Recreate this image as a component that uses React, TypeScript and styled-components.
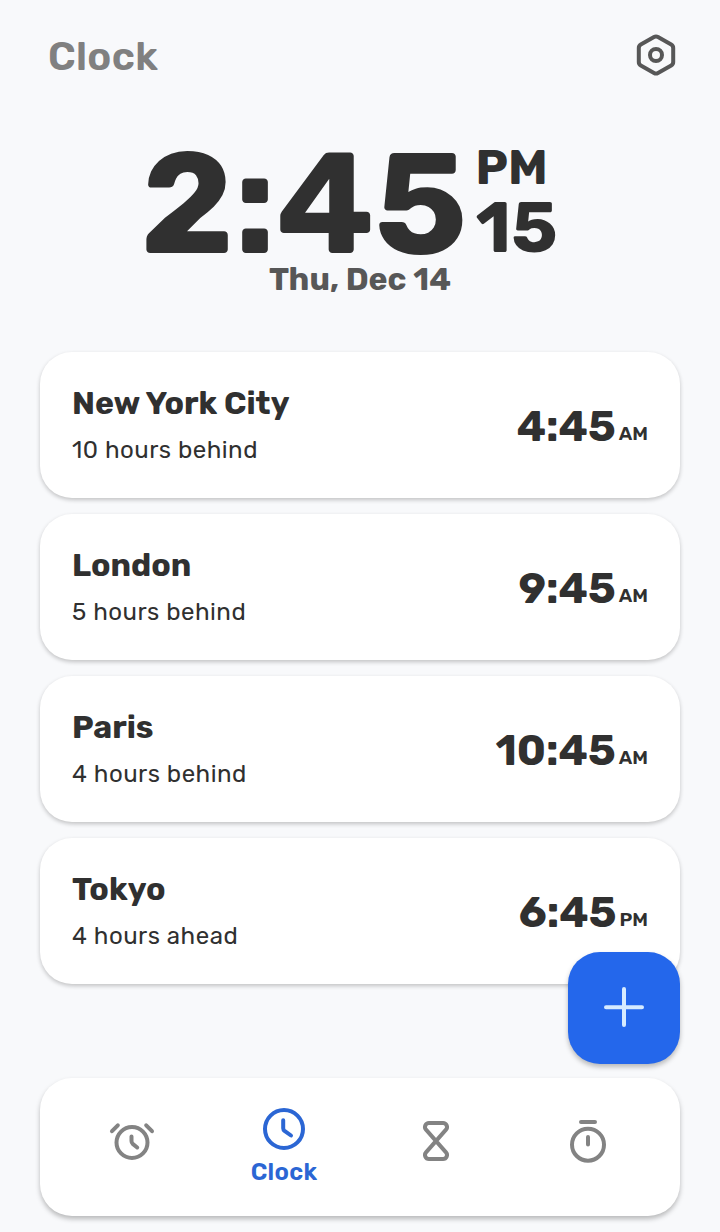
import React from 'react';
import styled, { createGlobalStyle } from 'styled-components';

const GlobalStyle = createGlobalStyle`
  * { box-sizing: border-box; }
  body {
    margin: 0;
    background: #f8f9fb;
    color: #303030;
    font-family: Rubik, Inter, "Liberation Sans", sans-serif;
  }
`;

const Screen = styled.div`
  position: relative;
  display: flex;
  flex-direction: column;
  width: 720px;
  height: 1232px;
  padding: 0 40px 16px;
  overflow: hidden;
`;

const Header = styled.header`
  display: flex;
  align-items: center;
  justify-content: space-between;
  height: 112px;
  padding: 0 0 1px 8px;
`;

const Title = styled.h1`
  margin: 0;
  padding-top: 2px;
  font-size: 40px;
  line-height: 40px;
  font-weight: 600;
  letter-spacing: 0.3px;
  color: #808080;
`;

const SettingsButton = styled.button`
  display: flex;
  padding: 0;
  border: 0;
  background: none;
  color: #575757;
`;

const Hero = styled.section`
  display: flex;
  flex-direction: column;
  height: 240px;
  padding-top: 38px;
`;

const HeroTime = styled.div`
  display: flex;
  gap: 13px;
  height: 118px;
  padding-left: 100.5px;
`;

const HeroDigits = styled.div`
  width: 322px;
  padding-top: 3px;
  font-size: 144px;
  line-height: 102px;
  font-weight: 700;
  white-space: nowrap;
`;

const HeroSide = styled.div`
  display: flex;
  flex-direction: column;
  gap: 18px;
`;

const Meridiem = styled.div`
  font-size: 48px;
  line-height: 35px;
  font-weight: 700;
`;

const Seconds = styled.div`
  font-size: 72px;
  line-height: 50px;
  font-weight: 700;
`;

const DateLine = styled.div`
  font-size: 32px;
  line-height: 22px;
  font-weight: 700;
  text-align: center;
  color: #575757;
`;

const CardList = styled.main`
  display: flex;
  flex-direction: column;
  gap: 16px;
`;

const Card = styled.article`
  display: flex;
  align-items: center;
  justify-content: space-between;
  height: 146px;
  padding: 0 32px;
  border-radius: 32px;
  background: #fff;
  box-shadow: 0 2px 4px rgba(0, 0, 0, 0.22);
`;

const Place = styled.div`
  display: flex;
  flex-direction: column;
  gap: 17px;
`;

const City = styled.h2`
  margin: 0;
  font-size: 32px;
  line-height: 32px;
  font-weight: 700;
`;

const Offset = styled.p`
  margin: 0;
  font-size: 24px;
  line-height: 28px;
  letter-spacing: 0.5px;
`;

const CardTime = styled.div`
  display: flex;
  align-items: flex-end;
  gap: 3px;
  padding-top: 4px;
`;

const Digits = styled.span`
  font-size: 43px;
  line-height: 42px;
  font-weight: 700;
`;

const Suffix = styled.span`
  font-size: 19.2px;
  line-height: 28px;
  font-weight: 600;
`;

const AddButton = styled.button`
  position: absolute;
  right: 40px;
  bottom: 168px;
  display: flex;
  align-items: center;
  justify-content: center;
  width: 112px;
  height: 112px;
  padding: 0;
  border: 0;
  border-radius: 32px;
  background: #2467eb;
  color: #d6ebff;
  box-shadow: 0 3px 5px rgba(0, 0, 0, 0.26);
`;

const Nav = styled.nav`
  display: flex;
  height: 138px;
  margin-top: auto;
  padding: 0 16px;
  border-radius: 32px;
  background: #fff;
  box-shadow: 0 3px 5px rgba(0, 0, 0, 0.26);
`;

const NavItem = styled.a<{ $active?: boolean }>`
  display: flex;
  flex: 1;
  flex-direction: column;
  align-items: center;
  padding-top: ${(p) => (p.$active ? 27 : 39)}px;
  color: ${(p) => (p.$active ? '#2b66d4' : '#838383')};
`;

const NavLabel = styled.span`
  margin-top: 10px;
  font-size: 24px;
  line-height: 18px;
  font-weight: 600;
  letter-spacing: 0.3px;
`;

const Icon = styled.svg`
  display: block;
  fill: none;
  stroke: currentColor;
  stroke-width: 4;
  stroke-linecap: round;
  stroke-linejoin: round;
`;

const zones = [
  { city: 'New York City', offset: '10 hours behind', time: '4:45', suffix: 'AM' },
  { city: 'London', offset: '5 hours behind', time: '9:45', suffix: 'AM' },
  { city: 'Paris', offset: '4 hours behind', time: '10:45', suffix: 'AM' },
  { city: 'Tokyo', offset: '4 hours ahead', time: '6:45', suffix: 'PM' },
];

const SettingsIcon = () => (
  <Icon width="48" height="48" viewBox="0 0 48 48">
    <path d="M22 5a4 4 0 0 1 4 0l13.200 7.400a4 4 0 0 1 2 3.500v14.200a4 4 0 0 1-2 3.500L26 41a4 4 0 0 1-4 0L8.800 33.600a4 4 0 0 1-2-3.500V15.900a4 4 0 0 1 2-3.500z" />
    <circle cx="24" cy="23" r="6" />
  </Icon>
);

const AlarmIcon = () => (
  <Icon width="48" height="48" viewBox="0 0 48 48">
    <circle cx="24" cy="25.500" r="15.500" />
    <path d="M23.500 19.500v4.500c0 1.200.4 2.100 1.200 2.900l4.500 3.600M4 14.200l5.800-5.900M44 14.200l-5.800-5.900" />
  </Icon>
);

const ClockIcon = () => (
  <Icon width="48" height="48" viewBox="0 0 48 48">
    <circle cx="24" cy="24" r="19" />
    <path d="M23.200 15.200v8c0 1 .4 1.900 1.300 2.600l6.500 4.700" />
  </Icon>
);

const HourglassIcon = () => (
  <Icon width="48" height="48" viewBox="0 0 48 48">
    <path d="M17 6h14a4 4 0 0 1 3 6.650L14 35.350A4 4 0 0 0 17 42h14a4 4 0 0 0 3-6.650L14 12.650A4 4 0 0 1 17 6z" />
  </Icon>
);

const TimerIcon = () => (
  <Icon width="48" height="48" viewBox="0 0 48 48">
    <circle cx="24" cy="27.700" r="16" />
    <path d="M17 5h14M24 20v7.500" />
  </Icon>
);

const PlusIcon = () => (
  <Icon width="48" height="48" viewBox="0 0 48 48">
    <path d="M24 5v36M6 23.200h36" />
  </Icon>
);

export default function App() {
  return (
    <>
      <GlobalStyle />
      <Screen>
        <Header>
          <Title>Clock</Title>
          <SettingsButton aria-label="Settings">
            <SettingsIcon />
          </SettingsButton>
        </Header>
        <Hero>
          <HeroTime>
            <HeroDigits>2:45</HeroDigits>
            <HeroSide>
              <Meridiem>PM</Meridiem>
              <Seconds>15</Seconds>
            </HeroSide>
          </HeroTime>
          <DateLine>Thu, Dec 14</DateLine>
        </Hero>
        <CardList>
          {zones.map((z) => (
            <Card key={z.city}>
              <Place>
                <City>{z.city}</City>
                <Offset>{z.offset}</Offset>
              </Place>
              <CardTime>
                <Digits>{z.time}</Digits>
                <Suffix>{z.suffix}</Suffix>
              </CardTime>
            </Card>
          ))}
        </CardList>
        <Nav>
          <NavItem aria-label="Alarm">
            <AlarmIcon />
          </NavItem>
          <NavItem $active>
            <ClockIcon />
            <NavLabel>Clock</NavLabel>
          </NavItem>
          <NavItem aria-label="Timer">
            <HourglassIcon />
          </NavItem>
          <NavItem aria-label="Stopwatch">
            <TimerIcon />
          </NavItem>
        </Nav>
        <AddButton aria-label="Add city">
          <PlusIcon />
        </AddButton>
      </Screen>
    </>
  );
}
